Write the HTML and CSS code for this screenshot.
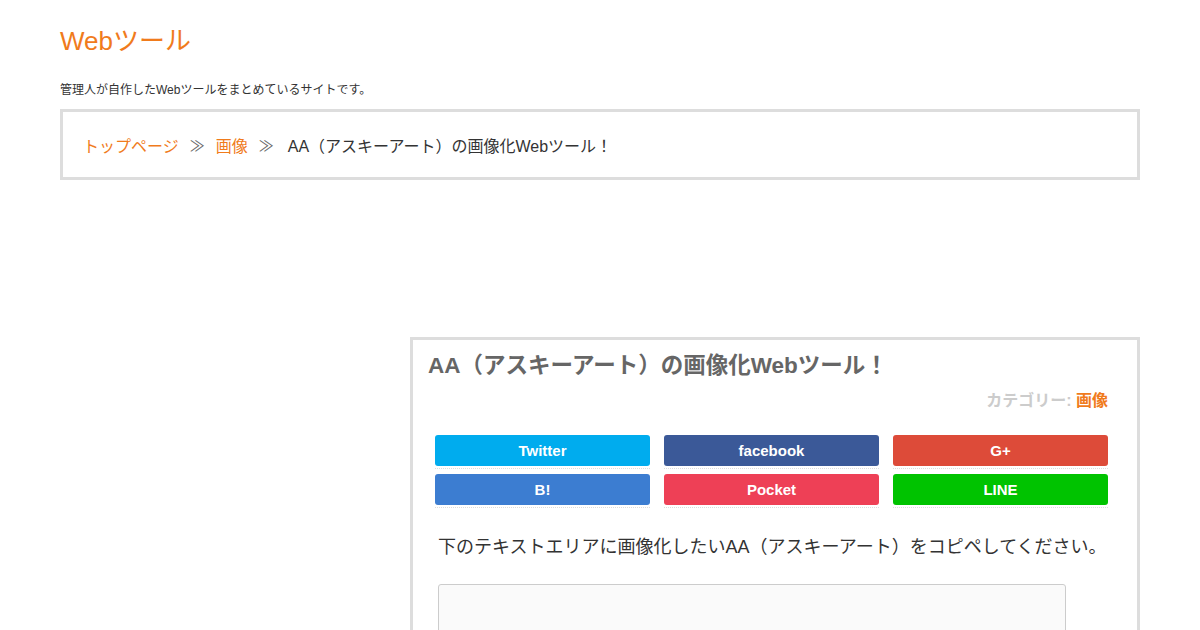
FILE: index.html
```html
<!DOCTYPE html>
<html lang="ja">
<head>
<meta charset="utf-8">
<title>AA（アスキーアート）の画像化Webツール！</title>
<link rel="stylesheet" href="styles.css">
</head>
<body>
<div class="wrap">
  <header class="site-header">
    <h1 class="site-title"><a href="#">Webツール</a></h1>
    <p class="site-desc">管理人が自作したWebツールをまとめているサイトです。</p>
  </header>
  <nav class="breadcrumb">
    <a href="#">トップページ</a><span class="sep">≫</span><a href="#">画像</a><span class="sep">≫</span><span class="current">AA（アスキーアート）の画像化Webツール！</span>
  </nav>
  <div class="ad-space"></div>
  <div class="columns">
    <aside class="sidebar"></aside>
    <main class="main">
      <article class="article">
        <h2 class="entry-title">AA（アスキーアート）の画像化Webツール！</h2>
        <div class="category">カテゴリー: <a href="#">画像</a></div>
        <ul class="share">
          <li><a class="btn tw" href="#">Twitter</a></li>
          <li><a class="btn fb" href="#">facebook</a></li>
          <li><a class="btn gp" href="#">G+</a></li>
          <li><a class="btn hb" href="#">B!</a></li>
          <li><a class="btn pk" href="#">Pocket</a></li>
          <li><a class="btn ln" href="#">LINE</a></li>
        </ul>
        <div class="body">
          <p class="lead">下のテキストエリアに画像化したいAA（アスキーアート）をコピペしてください。</p>
          <textarea class="aa-input"></textarea>
        </div>
      </article>
    </main>
  </div>
</div>
</body>
</html>
```

FILE: styles.css
```css
* { box-sizing: border-box; }
html, body { margin: 0; padding: 0; background: #fff; }
body {
  font-family: "Liberation Sans", "Noto Sans CJK JP", sans-serif;
  color: #333;
  overflow: hidden;
}
a { text-decoration: none; }
.wrap { width: 1080px; margin: 0 auto; }

.site-header { padding-top: 25px; }
.site-title { margin: 0; font-size: 26px; font-weight: normal; line-height: 32px; }
.site-title a { color: #f07b1c; }
.site-desc { margin: 25px 0 0; font-size: 12px; line-height: 16px; color: #333; }

.breadcrumb {
  margin-top: 11px;
  border: 3px solid #ddd;
  height: 71px;
  padding: 0 20px;
  display: flex;
  align-items: center;
  font-size: 16px;
  color: #333;
}
.breadcrumb a { color: #f07b1c; }
.breadcrumb .sep { color: #666; margin: 0 11px; font-size: 15px; }
.breadcrumb .current { margin-left: 3px; }

.ad-space { height: 157px; }

.columns { display: flex; justify-content: space-between; }
.sidebar { width: 335px; }
.main { width: 730px; border: 3px solid #ddd; border-bottom: none; height: 300px; }
.article { padding: 10px 0 0; }
.entry-title {
  margin: 0 0 0 15px;
  font-size: 22.5px;
  line-height: 32px;
  color: #666;
  font-weight: bold;
}
.category {
  margin: 7px 29px 0 0;
  text-align: right;
  font-size: 16px;
  line-height: 24px;
  font-weight: bold;
  color: #ccc;
}
.category a { color: #f07b1c; }

.share {
  list-style: none;
  margin: 22px 0 0 22px;
  padding: 0;
  width: 673px;
  display: grid;
  grid-template-columns: repeat(3, 1fr);
  column-gap: 14px;
  row-gap: 5px;
}
.share li { padding-bottom: 2px; border-bottom: 1px dotted #ddd; }
.btn {
  display: block;
  height: 31px;
  line-height: 31px;
  border-radius: 3px;
  text-align: center;
  color: #fff;
  font-weight: bold;
  font-size: 15px;
}
.tw { background: #00acee; }
.fb { background: #3b5998; }
.gp { background: #dd4b39; }
.hb { background: #3c7dd1; }
.pk { background: #ee4056; }
.ln { background: #00c300; }

.body { padding: 0 25px; }
.lead { margin: 25px 0 0; font-size: 18px; line-height: 28px; color: #333; }
.aa-input {
  display: block;
  margin-top: 23px;
  width: 628px;
  height: 150px;
  border: 1px solid #ccc;
  border-radius: 3px;
  background: #fafafa;
  resize: none;
}
```
